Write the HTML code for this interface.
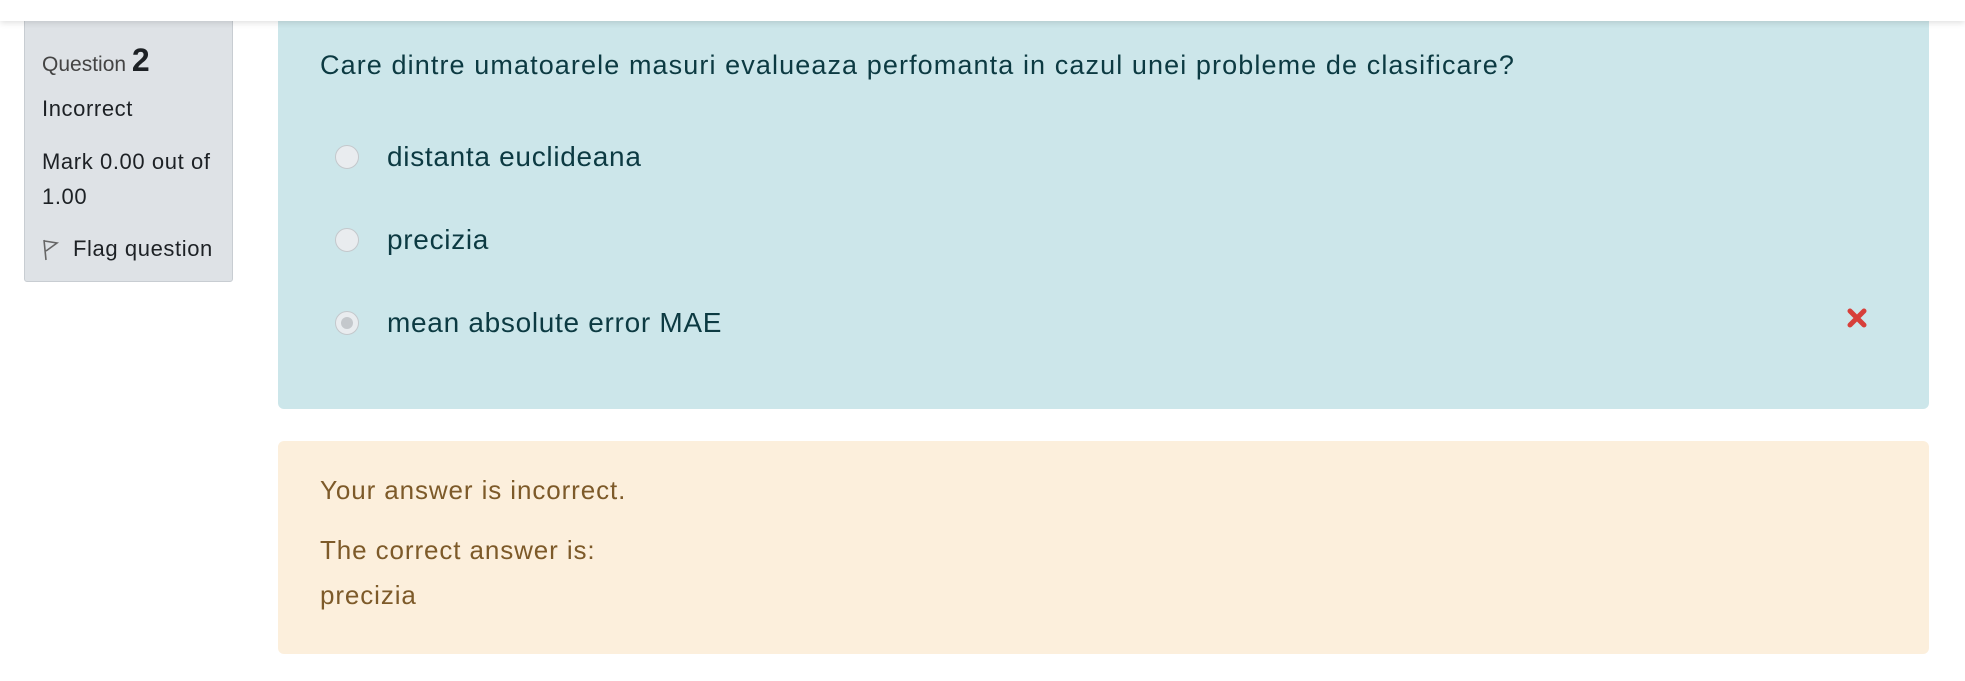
<!DOCTYPE html>
<html><head><style>
body{margin:0;width:1965px;height:681px;background:#fff;font-family:"Liberation Sans",sans-serif;position:relative;overflow:hidden}
.top{position:absolute;left:0;top:0;width:1965px;height:21px;background:#fff;box-shadow:0 2px 6px rgba(0,0,0,.12);z-index:2}
.side{position:absolute;left:24px;top:14px;width:207px;height:266px;background:#dee2e6;border:1px solid #c8cdd2;border-radius:3px;color:#1d2125}
.t{position:absolute;white-space:nowrap;line-height:1}
.s{font-size:22px;letter-spacing:0.6px;color:#1d2125}
.o{font-size:28px;letter-spacing:0.7px;color:#0c3a42}
.f{font-size:26px;letter-spacing:0.9px;color:#7d5a29}
.blue{position:absolute;left:278px;top:14px;width:1651px;height:395px;background:#cce6ea;border-radius:6px;color:#0c3a42}
.or{position:absolute;left:278px;top:441px;width:1651px;height:213px;background:#fcefdc;border-radius:6px;color:#7d5a29}
.r{position:absolute;left:335px;width:24px;height:24px;border-radius:50%;background:#e9ecef;border:1px solid #c4c8cc;box-sizing:border-box}
</style></head><body>
<div class="top"></div>
<div class="side"></div>
<div class="t" style="left:42px;top:44px;font-size:21px;color:#444">Question <b style="font-size:32px;color:#1d2125">2</b></div>
<div class="t s" style="left:42px;top:98px">Incorrect</div>
<div class="t s" style="left:42px;top:151px">Mark 0.00 out of</div>
<div class="t s" style="left:42px;top:186px">1.00</div>
<svg style="position:absolute;left:42px;top:238px" width="18" height="24" viewBox="0 0 18 24"><path d="M2 2 L4 22 M2.5 3 L15 5 L4 13" fill="none" stroke="#666" stroke-width="1.6"/></svg>
<div class="t s" style="left:73px;top:238px">Flag question</div>
<div class="blue"></div>
<div class="t" style="left:320px;top:52px;font-size:27px;letter-spacing:1.1px;color:#0c3a42">Care dintre umatoarele masuri evalueaza perfomanta in cazul unei probleme de clasificare?</div>
<div class="r" style="top:145px"></div>
<div class="t o" style="left:387px;top:143px">distanta euclideana</div>
<div class="r" style="top:228px"></div>
<div class="t o" style="left:387px;top:226px">precizia</div>
<div class="r" style="top:311px"></div>
<div style="position:absolute;left:341px;top:317px;width:12px;height:12px;border-radius:50%;background:#c4c8cc"></div>
<div class="t o" style="left:387px;top:309px">mean absolute error MAE</div>
<svg style="position:absolute;left:1846px;top:307px" width="22" height="22" viewBox="0 0 22 22"><path d="M4 4 L18 18 M18 4 L4 18" stroke="#d73f3a" stroke-width="5" stroke-linecap="round"/></svg>
<div class="or"></div>
<div class="t f" style="left:320px;top:477px">Your answer is incorrect.</div>
<div class="t f" style="left:320px;top:537px">The correct answer is:</div>
<div class="t f" style="left:320px;top:582px">precizia</div>
</body></html>
